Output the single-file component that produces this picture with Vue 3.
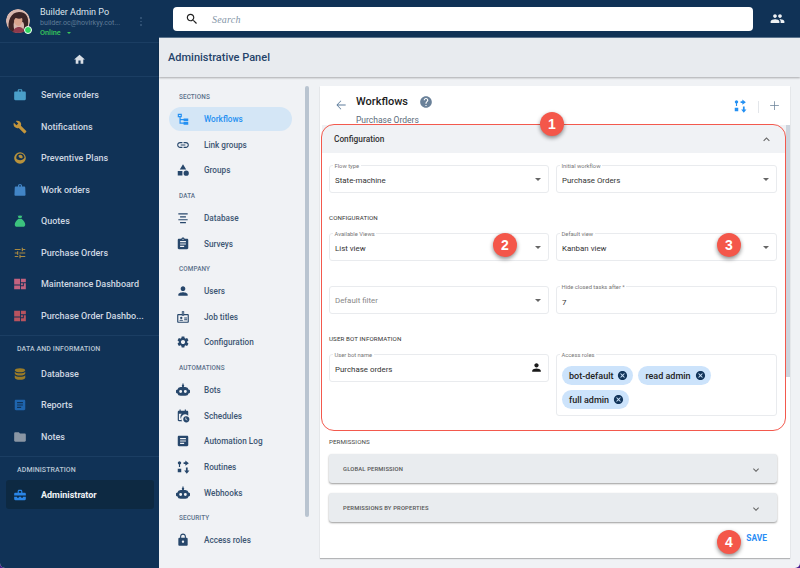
<script setup>
const P = {
  home: 'M10 20v-6h4v6h5v-8h3L12 3 2 12h3v8z',
  work: 'M20 6h-4V4c0-1.11-.89-2-2-2h-4c-1.11 0-2 .89-2 2v2H4c-1.11 0-1.99.89-1.99 2L2 19c0 1.11.89 2 2 2h16c1.11 0 2-.89 2-2V8c0-1.11-.89-2-2-2zm-6 0h-4V4h4v2z',
  build: 'M22.7 19l-9.1-9.1c.9-2.3.4-5-1.5-6.9-2-2-5-2.4-7.4-1.3L9 6 6 9 1.6 4.7C.4 7.1.9 10.1 2.9 12.1c1.9 1.9 4.6 2.4 6.9 1.5l9.1 9.1c.4.4 1 .4 1.4 0l2.3-2.3c.5-.4.5-1.1.1-1.4z',
  eye: 'M12 2a10 10 0 1 0 0 20 10 10 0 0 0 0-20zm0 2.2a7.8 7.8 0 0 1 7.8 7.3c-1.5 2.6-4.4 4.2-7.6 4.2-2.6 0-4.9-1-6.5-2.8A7.8 7.8 0 0 1 12 4.200zm.6 2.300a4 4 0 0 0-3.300 1.700c.4 2.500 2 4.300 4.600 4.300 1.100 0 2-.4 2.600-1a4 4 0 0 0-3.900-5z',
  bag: 'M15.500 6V4.500C15.500 2.800 13.900 1.500 12 1.500S8.500 2.800 8.500 4.500V6H5c-1.100 0-2 .9-2 2l-.5 12c0 1.100.9 2 2 2h15c1.100 0 2-.9 2-2L21 8c0-1.100-.9-2-2-2h-3.500zM10.500 4.500c0-.6.7-1 1.500-1s1.500.4 1.500 1V6h-3V4.500z',
  money: 'M8 2l2 1.500L12 2l2 1.500L16 2l-1.500 5h-5L8 2zM9.500 8h5C18 10.500 21 14.500 21 18c0 2.500-1.500 4-4 4H7c-2.500 0-4-1.500-4-4 0-3.500 3-7.500 6.500-10z',
  tune: 'M3 17v2h6v-2H3zM3 5v2h10V5H3zm10 16v-2h8v-2h-8v-2h-2v6h2zM7 9v2H3v2h4v2h2V9H7zm14 4v-2H11v2h10zm-6-4h2V7h4V5h-4V3h-2v6z',
  dash: 'M2 3h10v10H2zM13.500 3H22v6h-8.500zM13.500 10.500H17v3.500h-3.500zM18.500 10.500H22V21h-8.500v-5h5zM2 14.500h10V21H2z',
  db: 'M12 2c-5 0-9 1.500-9 3.500S7 9 12 9s9-1.500 9-3.500S17 2 12 2zM3 8v3c0 2 4 3.500 9 3.500s9-1.500 9-3.500V8c-1.500 1.800-5 2.700-9 2.700S4.500 9.800 3 8zm0 6v4.500C3 20.500 7 22 12 22s9-1.500 9-3.500V14c-1.500 1.800-5 2.700-9 2.700S4.500 15.800 3 14z',
  article: 'M19 3H5c-1.100 0-2 .9-2 2v14c0 1.100.9 2 2 2h14c1.100 0 2-.9 2-2V5c0-1.100-.9-2-2-2zm-5 14H7v-2h7v2zm3-4H7v-2h10v2zm0-4H7V7h10v2z',
  folder: 'M10 4H4c-1.100 0-1.990.9-1.990 2L2 18c0 1.100.9 2 2 2h16c1.100 0 2-.9 2-2V8c0-1.100-.9-2-2-2h-8l-2-2z',
  toolbox: 'M8 8V5.500C8 4.100 9.100 3 10.500 3h3C14.900 3 16 4.100 16 5.500V8h4c1.100 0 2 .9 2 2v3H2v-3c0-1.100.9-2 2-2h4zm2-2.800V8h4V5.200h-4zM2 15h5v1.500h3V15h4v1.500h3V15h5v4c0 1.100-.9 2-2 2H4c-1.100 0-2-.9-2-2v-4z',
  tree: 'M3 3h7v6H8v3h5v-1h8v5h-8v-2H8v4h5v-1h8v5h-8v-2H6V9H3V3zm2 2v2h3V5H5z',
  link: 'M3.900 12c0-1.710 1.390-3.100 3.100-3.100h4V7H7c-2.760 0-5 2.240-5 5s2.240 5 5 5h4v-1.900H7c-1.710 0-3.100-1.390-3.100-3.100zM8 13h8v-2H8v2zm9-6h-4v1.900h4c1.710 0 3.100 1.390 3.100 3.100s-1.390 3.100-3.100 3.100h-4V17h4c2.760 0 5-2.240 5-5s-2.240-5-5-5z',
  category: 'M12 2l-5.500 9h11zM17.500 13a4.500 4.500 0 1 0 0 9 4.500 4.500 0 0 0 0-9zM3 13.500h8v8H3z',
  lines: 'M4 4h16v2H4zM7 9h10v2H7zM4 14h16v2H4zM7 19h10v2H7z',
  clip: 'M19 3h-4.180C14.400 1.840 13.300 1 12 1c-1.300 0-2.400.84-2.820 2H5c-1.100 0-2 .9-2 2v14c0 1.100.9 2 2 2h14c1.100 0 2-.9 2-2V5c0-1.100-.9-2-2-2zm-7 0c.55 0 1 .45 1 1s-.45 1-1 1-1-.45-1-1 .45-1 1-1zm2 14H7v-2h7v2zm3-4H7v-2h10v2zm0-4H7V7h10v2z',
  person: 'M12 12c2.210 0 4-1.790 4-4s-1.790-4-4-4-4 1.790-4 4 1.790 4 4 4zm0 2c-2.670 0-8 1.340-8 4v2h16v-2c0-2.660-5.330-4-8-4z',
  badge: 'M10 2h4v5h6c1.100 0 2 .9 2 2v11c0 1.100-.9 2-2 2H4c-1.100 0-2-.9-2-2V9c0-1.100.9-2 2-2h6V2zm1.500 1.500v4h1v-4h-1zM4 9v11h16V9h-6v1h-4V9H4zm5 2.500a2 2 0 1 1 0 4 2 2 0 0 1 0-4zM5.500 18.500c0-1.300 2-2 3.500-2s3.500.7 3.500 2h-7zM14 13h5v1.500h-5zM14 16h5v1.500h-5z',
  gear: 'M19.140 12.940c.04-.3.06-.61.06-.94 0-.32-.02-.64-.07-.94l2.030-1.580c.18-.14.23-.41.12-.61l-1.920-3.320c-.12-.22-.37-.29-.59-.22l-2.390.96c-.5-.38-1.030-.7-1.620-.94l-.36-2.540c-.04-.24-.24-.41-.48-.41h-3.840c-.24 0-.43.17-.47.41l-.36 2.540c-.59.24-1.130.57-1.620.94l-2.390-.96c-.22-.08-.47 0-.59.22L2.740 8.870c-.12.21-.08.47.12.61l2.030 1.580c-.05.3-.09.63-.09.94s.02.64.07.94l-2.030 1.580c-.18.14-.23.41-.12.61l1.920 3.320c.12.22.37.29.59.22l2.390-.96c.5.38 1.030.7 1.620.94l.36 2.540c.05.24.24.41.48.41h3.840c.24 0 .44-.17.47-.41l.36-2.540c.59-.24 1.130-.56 1.620-.94l2.390.96c.22.08.47 0 .59-.22l1.920-3.320c.12-.22.07-.47-.12-.61l-2.010-1.580zM12 15.600c-1.980 0-3.600-1.620-3.600-3.600s1.620-3.600 3.600-3.600 3.600 1.620 3.600 3.600-1.620 3.600-3.600 3.600z',
  bot: 'M11 1h2v2.200a2 2 0 1 1-2 0V1zM8 7h8a6 6 0 0 1 5.800 4.500h.7a1.500 1.500 0 0 1 1.500 1.500v3a1.500 1.500 0 0 1-1.500 1.500h-.7A6 6 0 0 1 16 22H8a6 6 0 0 1-5.800-4.500h-.7A1.500 1.500 0 0 1 0 16v-3a1.500 1.500 0 0 1 1.500-1.500h.7A6 6 0 0 1 8 7zm0 5a2.500 2.500 0 1 0 0 5 2.500 2.500 0 0 0 0-5zm8 0a2.500 2.500 0 1 0 0 5 2.500 2.500 0 0 0 0-5z',
  sched: 'M6 1h2v2h7V1h2v2h2c1.100 0 2 .9 2 2v6.500a6.500 6.500 0 0 0-10.500 9.500H5c-1.100 0-2-.9-2-2V5c0-1.100.9-2 2-2h1V1zM5 8v11h5.100A6.500 6.500 0 0 1 19 8H5zm12 4.500a5.300 5.300 0 1 1 0 10.500 5.300 5.300 0 0 1 0-10.500zm-.8 2v3.600l2.900 1.700.7-1.100-2.300-1.300v-2.900h-1.300z',
  routes: 'M6 2a3 3 0 0 1 1 5.800V12H5V7.800A3 3 0 0 1 6 2zM3 15h6v6H3zM13 4h3V1l6 4.500L16 10V7h-3zM17 13h3v5h3l-4.500 5.500L14 18h3z',
  lock: 'M18 8h-1V6c0-2.760-2.240-5-5-5S7 3.240 7 6v2H6c-1.100 0-2 .9-2 2v10c0 1.100.9 2 2 2h12c1.100 0 2-.9 2-2V10c0-1.100-.9-2-2-2zm-6 9c-1.100 0-2-.9-2-2s.9-2 2-2 2 .9 2 2-.9 2-2 2zm3.100-9H8.900V6c0-1.710 1.390-3.100 3.100-3.100 1.710 0 3.100 1.390 3.100 3.100v2z',
  search: 'M15.500 14h-.79l-.28-.27C15.410 12.590 16 11.110 16 9.500 16 5.910 13.090 3 9.500 3S3 5.910 3 9.500 5.910 16 9.500 16c1.610 0 3.090-.59 4.230-1.570l.27.28v.79l5 4.990L20.490 19l-4.990-5zm-6 0C7.010 14 5 11.990 5 9.500S7.010 5 9.500 5 14 7.010 14 9.500 11.990 14 9.500 14z',
  people: 'M16 11c1.660 0 2.990-1.340 2.990-3S17.660 5 16 5c-1.660 0-3 1.340-3 3s1.340 3 3 3zm-8 0c1.660 0 2.990-1.340 2.990-3S9.660 5 8 5C6.340 5 5 6.340 5 8s1.340 3 3 3zm0 2c-2.330 0-7 1.170-7 3.500V19h14v-2.500c0-2.330-4.670-3.500-7-3.500zm8 0c-.29 0-.62.02-.97.05 1.160.84 1.970 1.970 1.970 3.450V19h6v-2.500c0-2.330-4.670-3.500-7-3.500z',
  help: 'M12 2C6.480 2 2 6.480 2 12s4.480 10 10 10 10-4.480 10-10S17.520 2 12 2zm1 17h-2v-2h2v2zm2.070-7.750l-.9.92C13.450 12.900 13 13.500 13 15h-2v-.5c0-1.100.45-2.100 1.170-2.830l1.240-1.260c.37-.36.59-.86.59-1.410 0-1.100-.9-2-2-2s-2 .9-2 2H8c0-2.210 1.790-4 4-4s4 1.790 4 4c0 .88-.36 1.680-.93 2.250z',
  back: 'M20 11.200H6.700l5.800-5.900L11.600 4.400 4.200 12l7.400 7.600.9-.9-5.800-5.900H20z',
  add: 'M19 12.600h-6.400V19h-1.200v-6.400H5v-1.200h6.400V5h1.200v6.400H19z',
  down: 'M16.590 8.590L12 13.170 7.410 8.590 6 10l6 6 6-6z',
  up: 'M12 8l-6 6 1.410 1.410L12 10.830l4.590 4.580L18 14z',
  cancel: 'M12 2C6.470 2 2 6.470 2 12s4.470 10 10 10 10-4.470 10-10S17.530 2 12 2zm5 13.590L15.590 17 12 13.410 8.410 17 7 15.590 10.590 12 7 8.410 8.410 7 12 10.590 15.590 7 17 8.410 13.410 12 17 15.590z'
}

const mainNav = [
  { t: 'Service orders', i: 'work', c: '#4a9fc9' },
  { t: 'Notifications', i: 'build', c: '#c4963c' },
  { t: 'Preventive Plans', i: 'eye', c: '#b8923c' },
  { t: 'Work orders', i: 'bag', c: '#4285c6' },
  { t: 'Quotes', i: 'money', c: '#3cc27e' },
  { t: 'Purchase Orders', i: 'tune', c: '#a98a42' },
  { t: 'Maintenance Dashboard', i: 'dash', c: '#c3627f' },
  { t: 'Purchase Order Dashbo...', i: 'dash', c: '#b9535f' }
]
const dataNav = [
  { t: 'Database', i: 'db', c: '#9b7c28' },
  { t: 'Reports', i: 'article', c: '#1f65ae' },
  { t: 'Notes', i: 'folder', c: '#8a96a4' }
]
const adminNav = [
  { h: 'SECTIONS' },
  { t: 'Workflows', i: 'tree', on: true },
  { t: 'Link groups', i: 'link' },
  { t: 'Groups', i: 'category' },
  { h: 'DATA' },
  { t: 'Database', i: 'lines' },
  { t: 'Surveys', i: 'clip' },
  { h: 'COMPANY' },
  { t: 'Users', i: 'person' },
  { t: 'Job titles', i: 'badge' },
  { t: 'Configuration', i: 'gear' },
  { h: 'AUTOMATIONS' },
  { t: 'Bots', i: 'bot' },
  { t: 'Schedules', i: 'sched' },
  { t: 'Automation Log', i: 'article' },
  { t: 'Routines', i: 'routes' },
  { t: 'Webhooks', i: 'bot' },
  { h: 'SECURITY' },
  { t: 'Access roles', i: 'lock' }
]
const chips = ['bot-default', 'read admin', 'full admin']
const marks = [
  { n: 1, cls: 'm1' },
  { n: 2, cls: 'm2' },
  { n: 3, cls: 'm3' },
  { n: 4, cls: 'm4' }
]
</script>

<template>
  <div class="screen">
    <div class="window">
      <aside class="side">
        <div class="profile">
          <div class="avatar">
            <svg viewBox="0 0 24 24" class="face">
              <circle cx="12" cy="12" r="12" fill="#d8b7ae" />
              <path d="M3 22C1 12 5 3 13 3s10 6 9 13c-1 5-3 8-5 8h-1c2-4 3-8 1-11-3 1-7 1-9 0-1 3 0 7 1 11H5z" fill="#3c2426" />
              <path d="M8 12c0-1 1-3 2-3 2 1 4 1 6 0 1 2 0 7-3 8-3 0-5-3-5-5z" fill="#d9a48e" />
              <path d="M7 24c0-4 3-6 6-6s5 2 5 6z" fill="#8f3a4c" />
            </svg>
            <span class="dot"></span>
          </div>
          <div class="who">
            <div class="name">Builder Admin Po</div>
            <div class="mail">builder.oc@hovirkyy.cot...</div>
            <div class="online">Online <i class="caret"></i></div>
          </div>
          <div class="kebab"><i></i><i></i><i></i></div>
        </div>
        <div class="homebar">
          <svg viewBox="0 0 24 24" class="homeico"><path :d="P.home" /></svg>
        </div>
        <nav class="group first">
          <a v-for="it in mainNav" :key="it.t" class="mitem">
            <svg viewBox="0 0 24 24" class="mico" :style="{ fill: it.c }"><path :d="P[it.i]" /></svg>
            <span>{{ it.t }}</span>
          </a>
        </nav>
        <nav class="group">
          <div class="ghead">DATA AND INFORMATION</div>
          <a v-for="it in dataNav" :key="it.t" class="mitem">
            <svg viewBox="0 0 24 24" class="mico" :style="{ fill: it.c }"><path :d="P[it.i]" /></svg>
            <span>{{ it.t }}</span>
          </a>
        </nav>
        <nav class="group last">
          <div class="ghead">ADMINISTRATION</div>
          <a class="mitem active">
            <svg viewBox="0 0 24 24" class="mico toolbox"><path :d="P.toolbox" /></svg>
            <span>Administrator</span>
          </a>
        </nav>
      </aside>

      <div class="right">
        <header class="top">
          <div class="searchbox">
            <svg viewBox="0 0 24 24" class="sico"><path :d="P.search" /></svg>
            <span class="ph">Search</span>
          </div>
          <svg viewBox="0 0 24 24" class="peo"><path :d="P.people" /></svg>
        </header>
        <div class="phead">Administrative Panel</div>
        <div class="body">
          <nav class="anav">
            <div class="alist">
              <template v-for="it in adminNav" :key="it.t || it.h">
                <div v-if="it.h" class="ahead">{{ it.h }}</div>
                <a v-else class="aitem" :class="{ on: it.on }">
                  <svg viewBox="0 0 24 24" class="aico"><path :d="P[it.i]" /></svg>
                  <span>{{ it.t }}</span>
                </a>
              </template>
            </div>
            <div class="athumb"></div>
          </nav>

          <section class="card">
            <div class="chead">
              <svg viewBox="0 0 24 24" class="backico"><path :d="P.back" /></svg>
              <div class="ctitles">
                <div class="ctitle">Workflows <svg viewBox="0 0 24 24" class="helpico"><path :d="P.help" /></svg></div>
                <div class="csub">Purchase Orders</div>
              </div>
              <svg viewBox="0 0 24 24" class="rico"><path :d="P.routes" /></svg>
              <span class="vsep"></span>
              <svg viewBox="0 0 24 24" class="addico"><path :d="P.add" /></svg>
            </div>

            <div class="scroll">
              <div class="thumb"></div>
              <div class="cfg-head">
                <span>Configuration</span>
                <svg viewBox="0 0 24 24" class="chev"><path :d="P.up" /></svg>
              </div>
              <div class="content">
                <div class="row">
                  <div class="field"><label>Flow type</label><span>State-machine</span><i class="tri"></i></div>
                  <div class="field"><label>Initial workflow</label><span>Purchase Orders</span><i class="tri"></i></div>
                </div>
                <div class="sect">CONFIGURATION</div>
                <div class="row">
                  <div class="field"><label>Available Views</label><span>List view</span><i class="tri"></i></div>
                  <div class="field"><label>Default view</label><span>Kanban view</span><i class="tri"></i></div>
                </div>
                <div class="row gap">
                  <div class="field"><span class="muted">Default filter</span><i class="tri"></i></div>
                  <div class="field"><label>Hide closed tasks after *</label><span class="seven">7</span></div>
                </div>
                <div class="sect">USER BOT INFORMATION</div>
                <div class="row top-align">
                  <div class="field">
                    <label>User bot name</label><span>Purchase orders</span>
                    <svg viewBox="0 0 24 24" class="fperson"><path :d="P.person" /></svg>
                  </div>
                  <div class="field roles">
                    <label>Access roles</label>
                    <div class="chip" v-for="c in chips" :key="c">
                      {{ c }}
                      <svg viewBox="0 0 24 24"><path :d="P.cancel" /></svg>
                    </div>
                  </div>
                </div>
                <div class="perm">PERMISSIONS</div>
                <div class="acc">
                  <span>GLOBAL PERMISSION</span>
                  <svg viewBox="0 0 24 24"><path :d="P.down" /></svg>
                </div>
                <div class="acc">
                  <span>PERMISSIONS BY PROPERTIES</span>
                  <svg viewBox="0 0 24 24"><path :d="P.down" /></svg>
                </div>
                <div class="actions">SAVE</div>
              </div>
            </div>
          </section>
        </div>
      </div>

      <div class="redbox"></div>
      <div v-for="m in marks" :key="m.n" class="mark" :class="m.cls">{{ m.n }}</div>
    </div>
  </div>
</template>

<style scoped>
.screen { width: 800px; height: 568px; background: #4a1d8f; overflow: hidden; font-family: Roboto, "Liberation Sans", sans-serif; }
.window { position: relative; width: 800px; height: 568px; display: flex; border-radius: 0 0 5px 5px; overflow: hidden; background: #f0f2f5; }

.side { width: 159px; flex: none; background: #103256; color: #d8e0e8; }
.profile { height: 43px; box-sizing: border-box; display: flex; align-items: flex-start; padding: 7px 0 0 6px; border-bottom: 1px solid #1b3e63; }
.avatar { position: relative; width: 24px; height: 24px; margin-top: 2px; flex: none; }
.face { width: 24px; height: 24px; display: block; border-radius: 50%; }
.dot { position: absolute; right: -2px; bottom: -1px; width: 6px; height: 6px; border-radius: 50%; background: #2fd65e; border: 1.500px solid #fff; }
.who { margin-left: 10px; width: 88px; flex: none; }
.name { font-size: 9px; line-height: 11px; color: #dfe5ec; white-space: nowrap; }
.mail { font-size: 7.100px; line-height: 10px; color: #5f7b97; white-space: nowrap; }
.online { font-size: 7.300px; line-height: 9px; color: #38c75b; font-weight: 500; }
.caret { display: inline-block; margin-left: 4px; vertical-align: middle; border: 2px solid transparent; border-top-color: #38c75b; border-bottom: 0; }
.kebab { margin: 10px 0 0 12px; display: flex; flex-direction: column; gap: 2px; }
.kebab i { display: block; width: 1.500px; height: 1.500px; background: #2f5073; }
.homebar { height: 34px; box-sizing: border-box; display: flex; align-items: center; justify-content: center; border-bottom: 1px solid #1b3e63; }
.homeico { width: 13px; height: 13px; fill: #d9dfe6; }

.group { border-bottom: 1px solid #1b3e63; padding-bottom: 3.500px; }
.group.first { padding-top: 2.500px; }
.group.last { border: 0; }
.ghead { font-size: 7px; line-height: 26px; height: 22px; padding-left: 17px; color: #b9c6d4; font-weight: 500; letter-spacing: 0.100px; }
.mitem { display: flex; align-items: center; height: 31.500px; padding-left: 13px; font-size: 9px; font-weight: 500; color: #cfd8e2; white-space: nowrap; }
.mico { width: 14px; height: 14px; margin-right: 14px; flex: none; }
.active { height: 29px; margin: 1px 5px 0 6px; padding-left: 7px; border-radius: 3px; background: #0d2942; color: #f1f4f7; font-weight: 700; }
.toolbox { fill: #2a86e8; }

.right { flex: 1; min-width: 0; display: flex; flex-direction: column; }
.top { height: 38px; flex: none; box-sizing: border-box; background: #103256; display: flex; align-items: center; padding: 0 15px 0 14px; justify-content: space-between; border-bottom: 1px solid #5c7690; }
.searchbox { width: 580px; height: 24px; box-sizing: border-box; background: #fff; border-radius: 4px; display: flex; align-items: center; padding-left: 12px; }
.sico { width: 14px; height: 14px; fill: #222; }
.ph { margin-left: 13px; padding-top: 1px; font: italic 10px "Liberation Serif", serif; color: #8496a8; letter-spacing: 0.200px; }
.peo { width: 15px; height: 15px; fill: #eef1f4; }
.phead { height: 39px; flex: none; box-sizing: border-box; background: #e8ebef; display: flex; align-items: center; padding-left: 9px; font-size: 11px; font-weight: 500; color: #25436a; box-shadow: 0 1px 2px rgba(0, 0, 0, .3); position: relative; }

.body { flex: 1; min-height: 0; display: flex; }
.anav { width: 161px; flex: none; position: relative; box-sizing: border-box; padding: 8px 0 0 10px; }
.ahead { height: 22px; line-height: 24px; font-size: 6.400px; color: #5a708a; font-weight: 500; padding-left: 10px; letter-spacing: 0.100px; }
.aitem { display: flex; align-items: center; height: 24px; margin-bottom: 1.650px; width: 123px; padding-left: 7px; box-sizing: border-box; border-radius: 12px; font-size: 8.200px; font-weight: 500; color: #3d5673; white-space: nowrap; }
.aitem.on { background: #d4e6f6; color: #2490f2; }
.aico { width: 14px; height: 14px; margin-right: 14px; flex: none; fill: #27476b; }
.aitem.on .aico { fill: #2490f2; }
.athumb { position: absolute; left: 146px; top: 9px; width: 4px; height: 431px; background: #b9c4d0; border-radius: 2px; }

.card { width: 470px; height: 472px; margin: 9px 0 0 0; background: #fff; box-shadow: 0 1px 1px rgba(0, 0, 0, .25); display: flex; flex-direction: column; overflow: hidden; }
.chead { height: 39px; flex: none; display: flex; padding-left: 14px; box-sizing: border-box; position: relative; }
.backico { width: 14px; height: 14px; fill: #5e7d9c; margin-top: 12px; flex: none; }
.ctitles { margin-left: 8px; width: 320px; flex: none; }
.ctitle { font-size: 11px; font-weight: 500; color: #1c1c1c; display: flex; align-items: center; height: 15px; margin-top: 8px; }
.helpico { width: 14px; height: 14px; fill: #6a8199; margin-left: 11px; }
.csub { font-size: 8.500px; color: #5c6b7a; margin-top: 6px; line-height: 11px; }
.rico { width: 14px; height: 14px; fill: #2490f2; margin: 13px 0 0 57px; flex: none; }
.vsep { width: 1px; height: 12px; background: #e3e6ea; margin: 15px 0 0 11px; flex: none; }
.addico { width: 15px; height: 15px; fill: #6b8299; margin: 12px 0 0 8px; flex: none; }

.scroll { position: relative; flex: 1; min-height: 0; padding-right: 4px; }
.thumb { position: absolute; right: 0; top: 0; width: 4px; height: 252px; background: #cdd5de; }
.cfg-head { height: 28px; margin-left: 2px; background: #f0f2f5; display: flex; align-items: center; justify-content: space-between; padding: 0 13px 0 12px; font-size: 8.300px; font-weight: 500; color: #333; }
.chev { width: 13px; height: 13px; fill: #666; }
.content { padding: 12px 9px 0; }
.row { display: grid; grid-template-columns: 220px 221px; gap: 7px; align-items: start; }
.row.gap { margin-top: 25px; }
.field { position: relative; height: 28px; box-sizing: border-box; border: 1px solid #e9ebee; border-radius: 3px; display: flex; align-items: center; padding: 3px 5px 0; font-size: 7.900px; color: #333; }
.field label { position: absolute; top: -3px; left: 3px; padding: 0 1.500px; background: #fff; font-size: 5.800px; line-height: 7px; color: #777; white-space: nowrap; }
.muted { color: #888; margin-top: -3px; }
.seven { margin-top: 2px; }
.tri { position: absolute; right: 7px; top: 12px; border: 3.200px solid transparent; border-top-color: #666; border-bottom: 0; }
.sect { height: 30px; padding-top: 10px; display: flex; align-items: center; font-size: 6.200px; font-weight: 400; color: #333; letter-spacing: 0.100px; }
.fperson { position: absolute; right: 5px; top: 6px; width: 13px; height: 13px; fill: #1a1a1a; }
.roles { height: 62px; display: flex; flex-wrap: wrap; align-content: flex-start; gap: 5px; padding: 11px 5px 0; }
.chip { height: 19px; display: flex; align-items: center; gap: 4px; padding: 0 5px 0 7px; border-radius: 10px; background: #cce3fb; font-size: 9px; font-weight: 500; color: #222; }
.chip svg { width: 11px; height: 11px; fill: #12355b; }
.perm { height: 24px; margin-top: 14px; line-height: 24px; font-size: 6.200px; font-weight: 400; color: #444; letter-spacing: 0.100px; }
.acc { height: 29px; margin-bottom: 10px; background: #e9ecef; border-radius: 3px; box-shadow: 0 1px 2px rgba(0, 0, 0, .4); display: flex; align-items: center; justify-content: space-between; padding: 0 15px 0 14px; font-size: 5.850px; font-weight: 500; color: #555; letter-spacing: 0.150px; }
.acc svg { width: 12px; height: 12px; fill: #666; margin-top: 3px; }
.actions { text-align: right; padding-right: 10px; margin-top: 8px; line-height: 12px; font-size: 8.400px; font-weight: 700; color: #2b8df5; }

.redbox { position: absolute; left: 321px; top: 124px; width: 465px; height: 307px; box-sizing: border-box; border: 1.600px solid #f3594d; border-radius: 13px; pointer-events: none; }
.mark { position: absolute; width: 24px; height: 24px; border-radius: 50%; background: #f4574a; color: #fff; font: 700 14px/24px "Liberation Sans", Arial, sans-serif; text-align: center; box-shadow: 0 2px 4px rgba(0, 0, 0, .45); }
.m1 { left: 540px; top: 112px; }
.m2 { left: 493px; top: 233px; }
.m3 { left: 717px; top: 233px; }
.m4 { left: 717px; top: 530px; }
</style>
